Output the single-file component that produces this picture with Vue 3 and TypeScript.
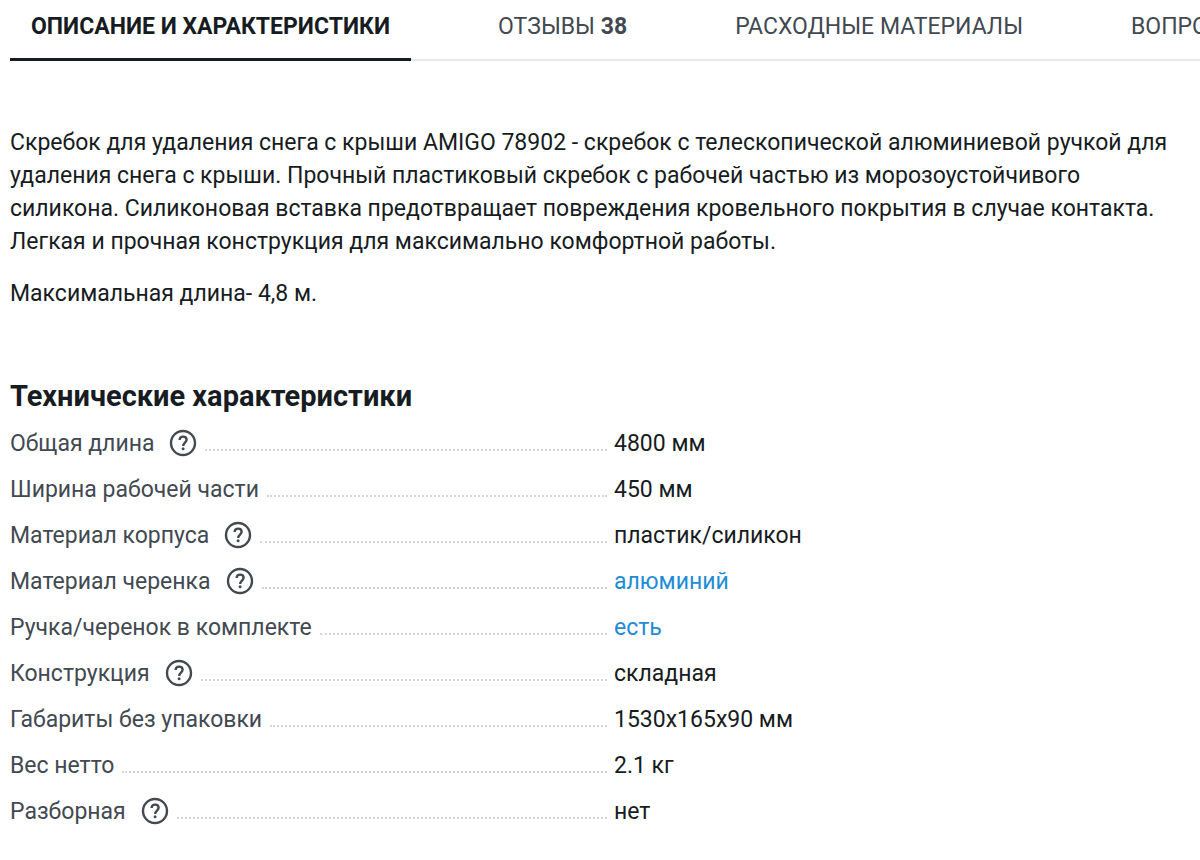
<script setup lang="ts">
interface Tab {
  title: string
  count?: number
  active?: boolean
}

interface Spec {
  name: string
  value: string
  hint?: boolean
  link?: boolean
}

const tabs: Tab[] = [
  { title: 'ОПИСАНИЕ И ХАРАКТЕРИСТИКИ', active: true },
  { title: 'ОТЗЫВЫ', count: 38 },
  { title: 'РАСХОДНЫЕ МАТЕРИАЛЫ' },
  { title: 'ВОПРОСЫ' },
]

const specs: Spec[] = [
  { name: 'Общая длина', value: '4800 мм', hint: true },
  { name: 'Ширина рабочей части', value: '450 мм' },
  { name: 'Материал корпуса', value: 'пластик/силикон', hint: true },
  { name: 'Материал черенка', value: 'алюминий', hint: true, link: true },
  { name: 'Ручка/черенок в комплекте', value: 'есть', link: true },
  { name: 'Конструкция', value: 'складная', hint: true },
  { name: 'Габариты без упаковки', value: '1530х165х90 мм' },
  { name: 'Вес нетто', value: '2.1 кг' },
  { name: 'Разборная', value: 'нет', hint: true },
]
</script>

<template>
  <main class="page">
    <nav class="tabs">
      <button v-for="tab in tabs" :key="tab.title" type="button" class="tab" :class="{ active: tab.active }">
        {{ tab.title }}<template v-if="tab.count">&nbsp;<b>{{ tab.count }}</b></template>
      </button>
    </nav>

    <section class="description">
      <p>
        Скребок для удаления снега с крыши AMIGO 78902 - скребок с телескопической алюминиевой ручкой для
        удаления снега с крыши. Прочный пластиковый скребок с рабочей частью из морозоустойчивого силикона.
        Силиконовая вставка предотвращает повреждения кровельного покрытия в случае контакта. Легкая и прочная
        конструкция для максимально комфортной работы.
      </p>
      <p>Максимальная длина- 4,8 м.</p>
    </section>

    <section class="specs">
      <h2>Технические характеристики</h2>
      <dl>
        <div v-for="spec in specs" :key="spec.name" class="row">
          <dt>
            <span>{{ spec.name }}</span>
            <button v-if="spec.hint" type="button" class="hint" :aria-label="'Подсказка: ' + spec.name">
              <svg viewBox="0 0 28 28" width="28" height="28" fill="none" stroke="currentColor" stroke-width="2.4">
                <circle cx="14" cy="14" r="12" />
                <path d="M10.6 11.1c0-2.1 1.4-3.5 3.5-3.5s3.5 1.3 3.5 3.2c0 2.7-3.4 2.9-3.4 6.1" />
                <circle cx="14.1" cy="19.8" r="1.5" fill="currentColor" stroke="none" />
              </svg>
            </button>
            <i class="leader"></i>
          </dt>
          <dd>
            <a v-if="spec.link" href="#">{{ spec.value }}</a>
            <template v-else>{{ spec.value }}</template>
          </dd>
        </div>
      </dl>
    </section>
  </main>
</template>

<style>
body {
  margin: 0;
  background: #fff;
  overflow-x: hidden;
}
</style>

<style scoped>
.page {
  padding-left: 10px;
  font-family: Roboto, "Liberation Sans", sans-serif;
  font-size: 23px;
  line-height: 33px;
  color: #171c22;
}

.tabs {
  display: flex;
  gap: 66px;
  overflow: hidden;
  box-shadow: inset 0 -2px #e8e9eb;
}

.tab {
  flex: none;
  padding: 10px 21px 15px;
  border: 0;
  border-bottom: 3px solid transparent;
  background: none;
  font: inherit;
  color: #424951;
  white-space: nowrap;
}

.tab.active {
  border-color: #171c22;
  font-weight: 700;
  color: #171c22;
}

.description {
  padding: 65px 20px 0 0;
}

p {
  margin: 0 0 19px;
}

h2 {
  margin: 0;
  font-size: 29px;
  line-height: 36px;
}

.specs {
  padding-top: 49px;
}

dl {
  margin: 6px 0 0;
}

.row {
  display: flex;
  height: 46px;
  align-items: center;
}

dt {
  display: flex;
  align-items: center;
  width: calc(50% + 2px);
  color: #424951;
}

dd {
  margin: 0 0 0 7px;
}

a {
  color: #1e8cd6;
  text-decoration: none;
}

.hint {
  display: flex;
  margin-left: 15px;
  padding: 0;
  border: 0;
  background: none;
  color: #424951;
}

.leader {
  flex: 1;
  align-self: flex-end;
  margin: 0 0 9px 8px;
  border-bottom: 2px dotted #d3d5d8;
}
</style>
